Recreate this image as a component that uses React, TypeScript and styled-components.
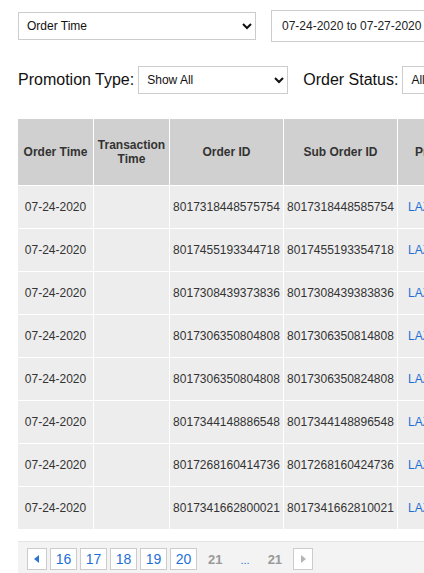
import React from 'react'
import styled, { createGlobalStyle } from 'styled-components'

const GlobalStyle = createGlobalStyle`
  html, body {
    margin: 0;
    padding: 0;
    background: #fff;
    overflow: hidden;
  }
  body {
    font-family: 'Liberation Sans', Arial, sans-serif;
    color: #333;
  }
`

type Row = {
  time: string
  orderId: string
  subOrderId: string
}

const rows: Row[] = [
  { time: '07-24-2020', orderId: '8017318448575754', subOrderId: '8017318448585754' },
  { time: '07-24-2020', orderId: '8017455193344718', subOrderId: '8017455193354718' },
  { time: '07-24-2020', orderId: '8017308439373836', subOrderId: '8017308439383836' },
  { time: '07-24-2020', orderId: '8017306350804808', subOrderId: '8017306350814808' },
  { time: '07-24-2020', orderId: '8017306350804808', subOrderId: '8017306350824808' },
  { time: '07-24-2020', orderId: '8017344148886548', subOrderId: '8017344148896548' },
  { time: '07-24-2020', orderId: '8017268160414736', subOrderId: '8017268160424736' },
  { time: '07-24-2020', orderId: '8017341662800021', subOrderId: '8017341662810021' },
]

const pages = ['16', '17', '18', '19', '20']

const App: React.FunctionComponent = () => {
  return (
    <>
      <GlobalStyle />
      <StyledPage>
        <StyledFilterRow $after={22}>
          <StyledSelect $width={238} defaultValue="order">
            <option value="order">Order Time</option>
          </StyledSelect>
          <StyledDateInput>07-24-2020 to 07-27-2020</StyledDateInput>
        </StyledFilterRow>

        <StyledFilterRow $after={22}>
          <StyledLabel>Promotion Type:</StyledLabel>
          <StyledSelect $width={150} defaultValue="all">
            <option value="all">Show All</option>
          </StyledSelect>
          <StyledLabel $gap={15}>Order Status:</StyledLabel>
          <StyledSelect $width={150} defaultValue="all">
            <option value="all">All</option>
          </StyledSelect>
        </StyledFilterRow>

        <StyledTable>
          <colgroup>
            <col style={{ width: 75 }} />
            <col style={{ width: 75 }} />
            <col style={{ width: 113 }} />
            <col style={{ width: 113 }} />
            <col style={{ width: 130 }} />
          </colgroup>
          <thead>
            <tr>
              <StyledTh>Order Time</StyledTh>
              <StyledTh>Transaction Time</StyledTh>
              <StyledTh>Order ID</StyledTh>
              <StyledTh>Sub Order ID</StyledTh>
              <StyledTh>Promotion Name</StyledTh>
            </tr>
          </thead>
          <tbody>
            {rows.map((row, i) => (
              <tr key={i}>
                <StyledTd>{row.time}</StyledTd>
                <StyledTd />
                <StyledTd>{row.orderId}</StyledTd>
                <StyledTd>{row.subOrderId}</StyledTd>
                <StyledTd $align="left">
                  <StyledLink href="#">LAZADA Flash Sale</StyledLink>
                </StyledTd>
              </tr>
            ))}
          </tbody>
        </StyledTable>

        <StyledPager>
          <StyledPageButton $arrow>
            <svg width="6" height="8" viewBox="0 0 6 8">
              <path d="M5 0 L0 4 L5 8 Z" fill="#2f74d0" />
            </svg>
          </StyledPageButton>
          {pages.map((p) => (
            <StyledPageButton key={p}>{p}</StyledPageButton>
          ))}
          <StyledPageCurrent>21</StyledPageCurrent>
          <StyledEllipsis>...</StyledEllipsis>
          <StyledPageCurrent>21</StyledPageCurrent>
          <StyledPageButton $arrow>
            <svg width="6" height="8" viewBox="0 0 6 8">
              <path d="M1 0 L6 4 L1 8 Z" fill="#b5b5b5" />
            </svg>
          </StyledPageButton>
        </StyledPager>
      </StyledPage>
    </>
  )
}

const StyledPage = styled('div')`
  width: 760px;
  padding: 10px 0 0 18px;
`

const StyledFilterRow = styled('div')<{ $after: number }>`
  display: flex;
  align-items: center;
  height: 32px;
  margin-bottom: ${(p) => p.$after}px;
`

const StyledSelect = styled('select')<{ $width: number }>`
  width: ${(p) => p.$width}px;
  height: 28px;
  border: 1px solid #ccc;
  border-radius: 0;
  background: #fff;
  color: #111;
  font-family: 'Liberation Sans', Arial, sans-serif;
  font-size: 12px;
  padding: 0 4px;
  margin: 0;
  flex-shrink: 0;
`

const StyledDateInput = styled('div')`
  margin-left: 15px;
  height: 30px;
  width: 230px;
  border: 1px solid #ccc;
  display: flex;
  align-items: center;
  padding-left: 10px;
  font-size: 12px;
  color: #222;
  flex-shrink: 0;
`

const StyledLabel = styled('span')<{ $gap?: number }>`
  font-size: 16px;
  color: #111;
  margin-left: ${(p) => p.$gap ?? 0}px;
  margin-right: 4px;
  white-space: nowrap;
`

const StyledTable = styled('table')`
  border-collapse: separate;
  border-spacing: 1px;
  table-layout: fixed;
  font-size: 12px;
  color: #333;
  margin-left: -1px;
`

const StyledTh = styled('th')`
  background: #d0d0d0;
  height: 66px;
  padding: 0 3px;
  font-weight: bold;
  text-align: center;
  vertical-align: middle;
  white-space: normal;
  box-sizing: border-box;
`

const StyledTd = styled('td')<{ $align?: 'left' | 'center' }>`
  background: #ededed;
  height: 42px;
  padding: 0 3px 0 ${(p) => (p.$align === 'left' ? 10 : 3)}px;
  text-align: ${(p) => p.$align ?? 'center'};
  vertical-align: middle;
  white-space: nowrap;
  overflow: hidden;
  box-sizing: border-box;
`

const StyledLink = styled('a')`
  color: #1d6fd6;
  text-decoration: none;
`

const StyledPager = styled('div')`
  margin-top: 11px;
  background: #f3f3f3;
  border-top: 1px solid #e4e4e4;
  height: 40px;
  display: flex;
  align-items: flex-start;
  padding: 6px 0 0 9px;
  gap: 3px;
`

const StyledPageButton = styled('span')<{ $arrow?: boolean }>`
  box-sizing: border-box;
  height: 22px;
  min-width: ${(p) => (p.$arrow ? 20 : 27)}px;
  padding: 0 ${(p) => (p.$arrow ? 0 : 4)}px;
  background: #fff;
  border: 1px solid #ccc;
  color: #1d6fd6;
  font-size: 14px;
  display: flex;
  align-items: center;
  justify-content: center;
  cursor: pointer;
`

const StyledPageCurrent = styled('span')`
  height: 22px;
  display: flex;
  align-items: center;
  padding: 0 8px;
  color: #999;
  font-size: 13px;
  font-weight: bold;
`

const StyledEllipsis = styled('span')`
  height: 22px;
  display: flex;
  align-items: center;
  padding: 2px 7px 0;
  box-sizing: border-box;
  color: #1d6fd6;
  font-size: 11px;
`

export default App
